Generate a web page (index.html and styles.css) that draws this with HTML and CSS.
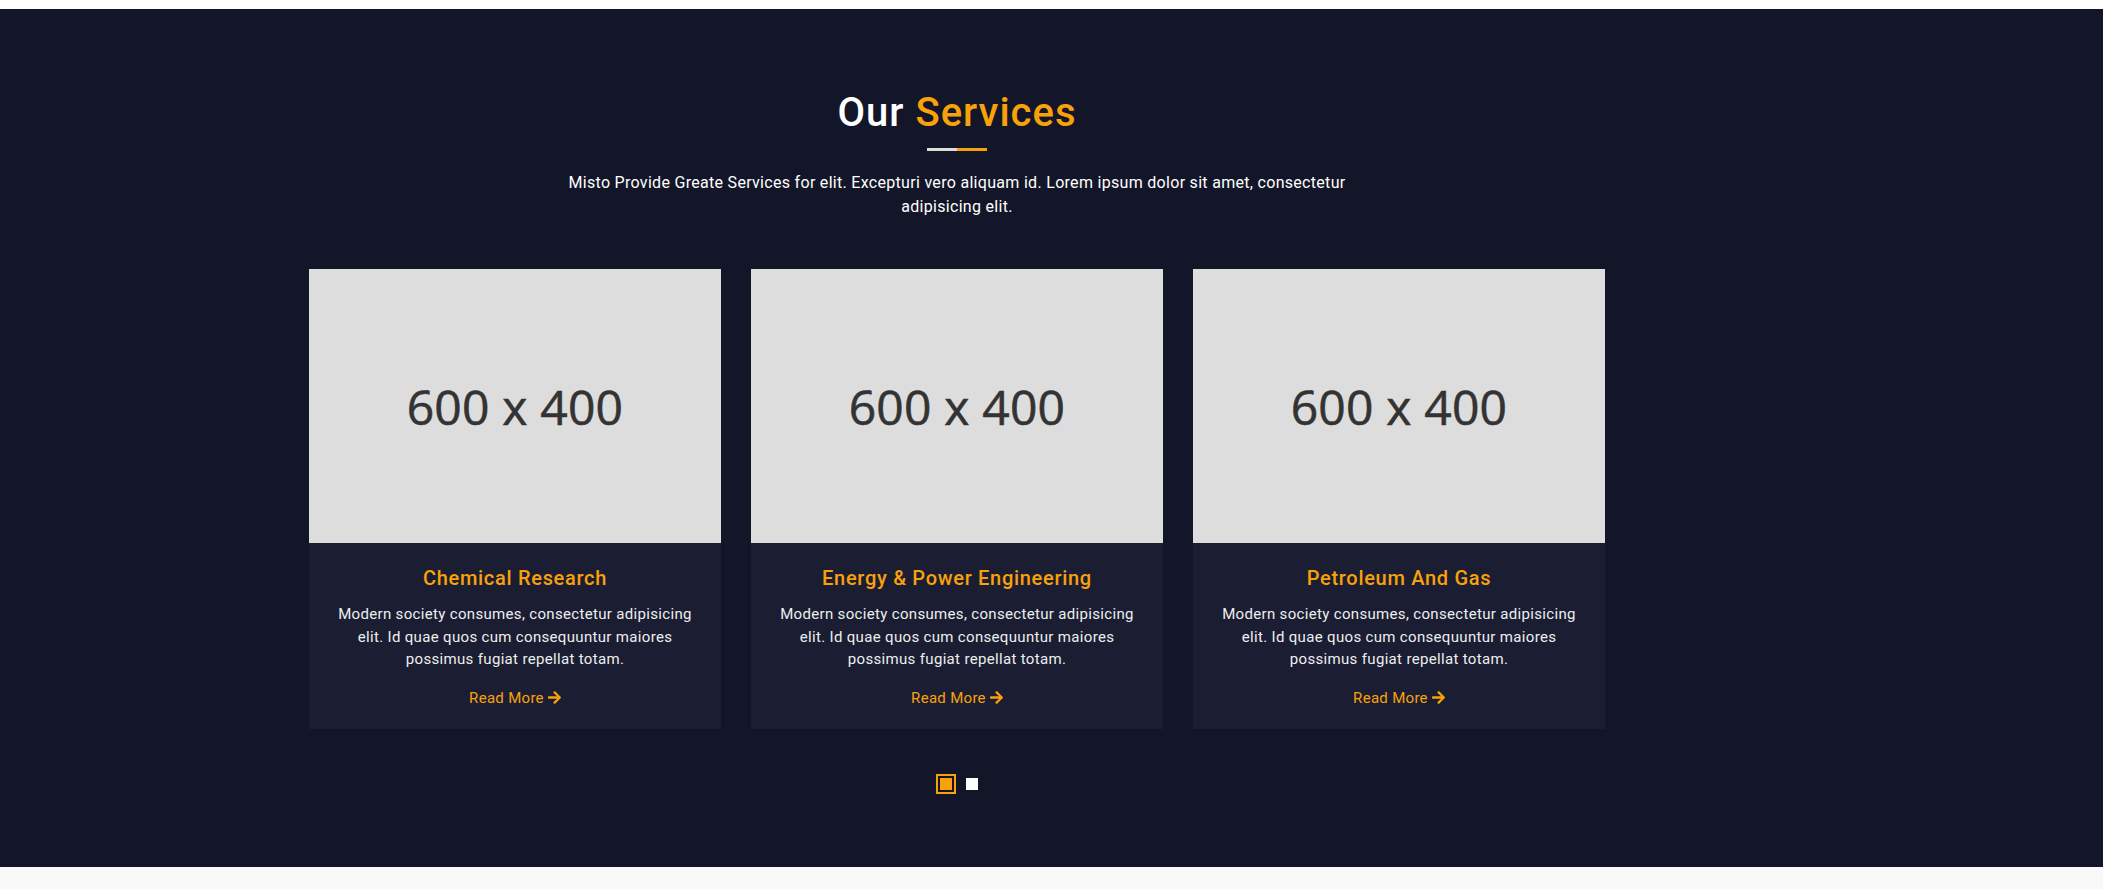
FILE: index.html
```html
<!DOCTYPE html>
<html lang="en">
<head>
<meta charset="utf-8">
<title>Our Services</title>
<link rel="stylesheet" href="styles.css">
</head>
<body>
<div class="topbar"></div>
<section class="services">
  <div class="container">
    <div class="heading">
      <h2 class="heading-title">Our <span class="accent">Services</span></h2>
      <div class="heading-line"><span class="line-light"></span><span class="line-accent"></span></div>
      <p class="heading-text">Misto Provide Greate Services for elit. Excepturi vero aliquam id. Lorem ipsum dolor sit amet, consectetur adipisicing elit.</p>
    </div>
    <div class="cards">
      <article class="card">
        <div class="card-img"><span>600 x 400</span></div>
        <div class="card-body">
          <h3 class="card-title">Chemical Research</h3>
          <p class="card-text">Modern society consumes, consectetur adipisicing elit. Id quae quos cum consequuntur maiores possimus fugiat repellat totam.</p>
          <div class="card-more"><a class="card-link" href="#">Read More <svg class="arrow" viewBox="0 0 448 512"><path d="M190.5 66.9l22.2-22.2c9.4-9.4 24.6-9.4 33.9 0L441 239c9.4 9.4 9.4 24.6 0 33.9L246.6 467.3c-9.4 9.4-24.6 9.4-33.9 0l-22.2-22.2c-9.5-9.5-9.3-25 .4-34.3L311.4 296H24c-13.3 0-24-10.7-24-24v-32c0-13.3 10.7-24 24-24h287.4L190.9 101.2c-9.8-9.3-10-24.8-.4-34.3z"/></svg></a></div>
        </div>
      </article>
      <article class="card">
        <div class="card-img"><span>600 x 400</span></div>
        <div class="card-body">
          <h3 class="card-title">Energy &amp; Power Engineering</h3>
          <p class="card-text">Modern society consumes, consectetur adipisicing elit. Id quae quos cum consequuntur maiores possimus fugiat repellat totam.</p>
          <div class="card-more"><a class="card-link" href="#">Read More <svg class="arrow" viewBox="0 0 448 512"><path d="M190.5 66.9l22.2-22.2c9.4-9.4 24.6-9.4 33.9 0L441 239c9.4 9.4 9.4 24.6 0 33.9L246.6 467.3c-9.4 9.4-24.6 9.4-33.9 0l-22.2-22.2c-9.5-9.5-9.3-25 .4-34.3L311.4 296H24c-13.3 0-24-10.7-24-24v-32c0-13.3 10.7-24 24-24h287.4L190.9 101.2c-9.8-9.3-10-24.8-.4-34.3z"/></svg></a></div>
        </div>
      </article>
      <article class="card">
        <div class="card-img"><span>600 x 400</span></div>
        <div class="card-body">
          <h3 class="card-title">Petroleum And Gas</h3>
          <p class="card-text">Modern society consumes, consectetur adipisicing elit. Id quae quos cum consequuntur maiores possimus fugiat repellat totam.</p>
          <div class="card-more"><a class="card-link" href="#">Read More <svg class="arrow" viewBox="0 0 448 512"><path d="M190.5 66.9l22.2-22.2c9.4-9.4 24.6-9.4 33.9 0L441 239c9.4 9.4 9.4 24.6 0 33.9L246.6 467.3c-9.4 9.4-24.6 9.4-33.9 0l-22.2-22.2c-9.5-9.5-9.3-25 .4-34.3L311.4 296H24c-13.3 0-24-10.7-24-24v-32c0-13.3 10.7-24 24-24h287.4L190.9 101.2c-9.8-9.3-10-24.8-.4-34.3z"/></svg></a></div>
        </div>
      </article>
    </div>
    <div class="dots">
      <span class="dot dot-active"><span class="dot-inner"></span></span>
      <span class="dot"></span>
    </div>
  </div>
</section>
<div class="below"></div>
</body>
</html>
```

FILE: styles.css
```css
* { box-sizing: border-box; }

html, body {
  margin: 0;
  padding: 0;
  background: #ffffff;
  font-family: Roboto, "Liberation Sans", sans-serif;
}

.topbar {
  height: 9px;
  background: #ffffff;
}

.services {
  background: #131628;
  padding: 80px 189px 73px 0;
}

.container {
  width: 1320px;
  margin: 0 auto;
  padding: 0 12px;
}

.heading {
  display: flex;
  flex-direction: column;
  align-items: center;
  text-align: center;
}

.heading-title {
  margin: 0;
  font-size: 40px;
  line-height: 48px;
  font-weight: 500;
  letter-spacing: 1px;
  color: #ffffff;
}

.accent { color: #f9a10a; }

.heading-line {
  display: flex;
  margin-top: 11px;
  height: 3px;
}

.line-light {
  width: 30px;
  background: #dddddd;
}

.line-accent {
  width: 30px;
  background: #f9a10a;
}

.heading-text {
  margin: 20px 0 0;
  max-width: 820px;
  font-size: 16px;
  line-height: 24px;
  letter-spacing: 0.3px;
  color: #ffffff;
}

.cards {
  display: grid;
  grid-template-columns: repeat(3, 412px);
  gap: 30px;
  margin-top: 50px;
}

.card {
  background: #1b1e33;
  display: flex;
  flex-direction: column;
}

.card-img {
  height: 274px;
  background: #dddddd;
  display: flex;
  align-items: center;
  justify-content: center;
}

.card-img span {
  font-family: "Open Sans", "Noto Sans", sans-serif;
  font-size: 48px;
  font-weight: 500;
  -webkit-text-stroke: 0.6px #333333;
  color: #333333;
  letter-spacing: 0.2px;
}

.card-body {
  padding: 23px 26px 20px;
  text-align: center;
}

.card-title {
  margin: 0;
  font-size: 20px;
  line-height: 24px;
  font-weight: 500;
  letter-spacing: 0.7px;
  color: #f9a10a;
}

.card-text {
  margin: 13px 0 0;
  font-size: 15px;
  line-height: 22.5px;
  letter-spacing: 0.33px;
  color: #eeeeee;
}

.card-more {
  display: flex;
  justify-content: center;
  margin-top: 16px;
  height: 22.5px;
}

.card-link {
  display: flex;
  align-items: center;
  gap: 4px;
  font-size: 15px;
  line-height: 22.5px;
  letter-spacing: 0.3px;
  color: #f9a10a;
  text-decoration: none;
}

.arrow {
  width: 13px;
  height: 15px;
  fill: #f9a10a;
}

.dots {
  display: flex;
  justify-content: center;
  align-items: center;
  gap: 10px;
  margin-top: 45px;
}

.dot {
  display: block;
  width: 12px;
  height: 12px;
  background: #ffffff;
}

.dot-active {
  width: 20px;
  height: 20px;
  background: transparent;
  border: 2px solid #f9a10a;
  padding: 2px;
}

.dot-inner {
  display: block;
  width: 12px;
  height: 12px;
  background: #f9a10a;
}

.below {
  height: 22px;
  background: #f9f9f9;
}
```
